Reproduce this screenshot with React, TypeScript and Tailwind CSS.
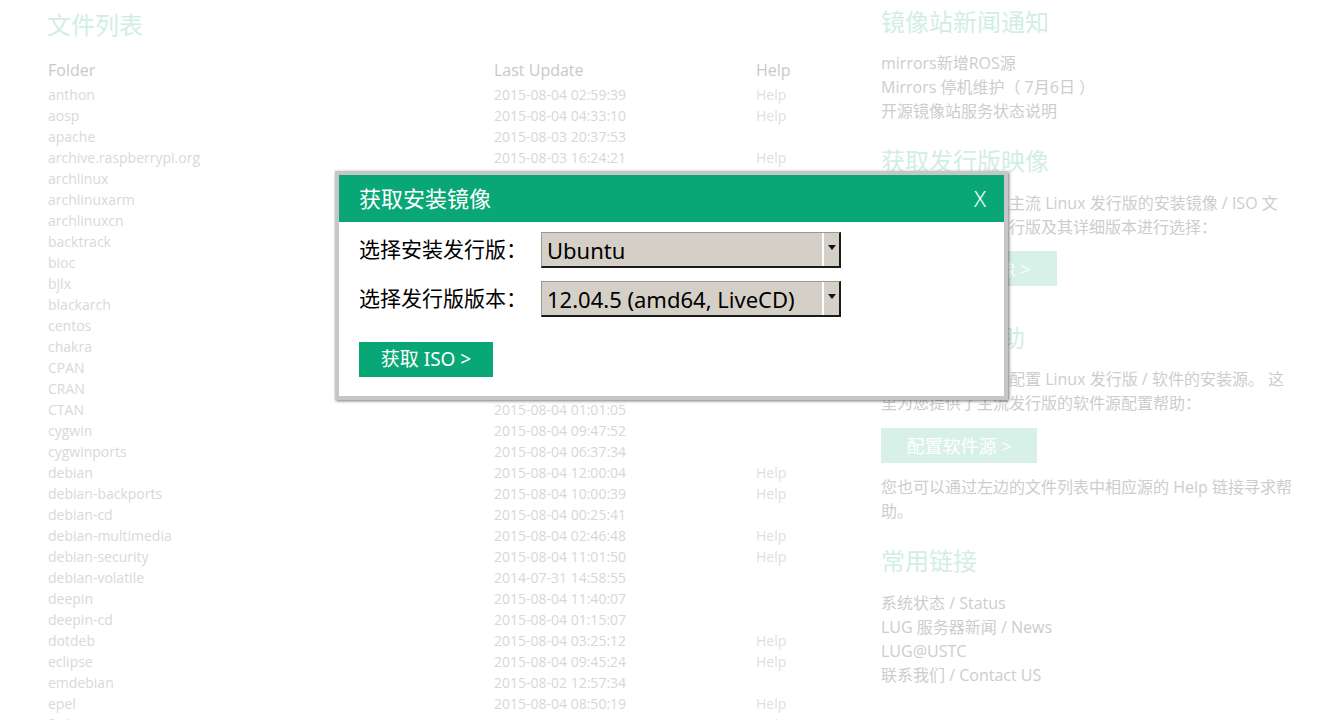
import React from "react"

type Row = { name: string; date: string; help?: boolean }

const rows: Row[] = [
	{ name: "anthon", date: "2015-08-04 02:59:39", help: true },
	{ name: "aosp", date: "2015-08-04 04:33:10", help: true },
	{ name: "apache", date: "2015-08-03 20:37:53" },
	{ name: "archive.raspberrypi.org", date: "2015-08-03 16:24:21", help: true },
	{ name: "archlinux", date: "2015-08-04 09:12:40", help: true },
	{ name: "archlinuxarm", date: "2015-08-04 08:01:22" },
	{ name: "archlinuxcn", date: "2015-08-04 10:45:03", help: true },
	{ name: "backtrack", date: "2015-08-03 22:11:18" },
	{ name: "bioc", date: "2015-08-04 03:30:51" },
	{ name: "bjlx", date: "2015-08-04 05:20:09" },
	{ name: "blackarch", date: "2015-08-04 07:44:36" },
	{ name: "centos", date: "2015-08-04 06:02:15", help: true },
	{ name: "chakra", date: "2015-08-04 04:18:27" },
	{ name: "CPAN", date: "2015-08-04 11:26:44", help: true },
	{ name: "CRAN", date: "2015-08-04 02:05:33", help: true },
	{ name: "CTAN", date: "2015-08-04 01:01:05" },
	{ name: "cygwin", date: "2015-08-04 09:47:52" },
	{ name: "cygwinports", date: "2015-08-04 06:37:34" },
	{ name: "debian", date: "2015-08-04 12:00:04", help: true },
	{ name: "debian-backports", date: "2015-08-04 10:00:39", help: true },
	{ name: "debian-cd", date: "2015-08-04 00:25:41" },
	{ name: "debian-multimedia", date: "2015-08-04 02:46:48", help: true },
	{ name: "debian-security", date: "2015-08-04 11:01:50", help: true },
	{ name: "debian-volatile", date: "2014-07-31 14:58:55" },
	{ name: "deepin", date: "2015-08-04 11:40:07" },
	{ name: "deepin-cd", date: "2015-08-04 01:15:07" },
	{ name: "dotdeb", date: "2015-08-04 03:25:12", help: true },
	{ name: "eclipse", date: "2015-08-04 09:45:24", help: true },
	{ name: "emdebian", date: "2015-08-02 12:57:34" },
	{ name: "epel", date: "2015-08-04 08:50:19", help: true },
	{ name: "fedora", date: "2015-08-04 07:33:02", help: true },
]

function FakeSelect({ value }: { value: string }) {
	return (
		<div className="flex h-[36px] w-[300px] bg-[#d4d0c8] border-t border-l border-[#9a9890] border-b-2 border-r-2 border-b-[#1a1a1a] border-r-[#1a1a1a]">
			<div className="flex-1 pl-[5px] text-[22px] leading-[34px] text-black">{value}</div>
			<div className="flex w-[17px] items-start justify-center border-l-2 border-white pt-[12px]">
				<div className="h-0 w-0 border-x-[4px] border-t-[5px] border-x-transparent border-t-[#111]" />
			</div>
		</div>
	)
}

export default function App() {
	return (
		<div className="relative h-[720px] w-[1324px] overflow-hidden bg-white font-['Open_Sans','Noto_Sans_CJK_SC',sans-serif]">
			{/* Background page (faded behind modal) */}
			<div className="flex">
				{/* File list */}
				<div className="w-[881px] shrink-0 pl-[47px] pt-[8px]">
					<h1 className="h-[34px] text-[24px] leading-[34px] text-[#d2eee4]">文件列表</h1>
					<div className="mt-[16px] grid grid-cols-[446px_262px_1fr] pl-px">
						<div className="h-[26px] text-[16px] leading-[24px] text-[#c9c9c9]">Folder</div>
						<div className="h-[26px] text-[16px] leading-[24px] text-[#c9c9c9]">Last Update</div>
						<div className="h-[26px] text-[16px] leading-[24px] text-[#c9c9c9]">Help</div>
						{rows.map((r) => (
							<React.Fragment key={r.name}>
								<div className="h-[21px] text-[14px] leading-[21px] text-[#d7d9da]">{r.name}</div>
								<div className="h-[21px] text-[14px] leading-[21px] text-[#d7d7d7]">{r.date}</div>
								<div className="h-[21px] text-[14px] leading-[21px] text-[#dedfe0]">{r.help ? "Help" : ""}</div>
							</React.Fragment>
						))}
					</div>
				</div>

				{/* Side column */}
				<div className="w-[416px] pt-[5px] text-[16px] leading-[24px] text-[#cdcdcd]">
					<h2 className="h-[34px] text-[24px] leading-[34px] text-[#d2eee4]">镜像站新闻通知</h2>
					<div className="mt-[12px]">
						<div>mirrors新增ROS源</div>
						<div>Mirrors 停机维护（ 7月6日 ）</div>
						<div>开源镜像站服务状态说明</div>
					</div>

					<h2 className="mt-[21px] h-[34px] text-[24px] leading-[34px] text-[#d2eee4]">获取发行版映像</h2>
					<p className="mt-[13px]">
						您可以在这里获取主流 Linux 发行版的安装镜像 / ISO 文件，请在下方对发行版及其详细版本进行选择：
					</p>
					<div className="mt-[12px] flex h-[35px] w-[176px] items-center justify-center bg-[#d7f1e9] text-[18px] text-white">
						获取安装镜像 &gt;
					</div>

					<h2 className="mt-[35px] h-[34px] text-[24px] leading-[34px] text-[#d2eee4]">获取配置帮助</h2>
					<p className="mt-[12px]">
						使用前需要先正确配置 Linux 发行版 / 软件的安装源。 这里为您提供了主流发行版的软件源配置帮助：
					</p>
					<div className="mt-[13px] flex h-[35px] w-[156px] items-center justify-center bg-[#d7f1e9] text-[18px] text-white">
						配置软件源 &gt;
					</div>
					<p className="mt-[12px]">您也可以通过左边的文件列表中相应源的 Help 链接寻求帮助。</p>

					<h2 className="mt-[21px] h-[34px] text-[24px] leading-[34px] text-[#d2eee4]">常用链接</h2>
					<div className="mt-[13px]">
						<div>系统状态 / Status</div>
						<div>LUG 服务器新闻 / News</div>
						<div>LUG@USTC</div>
						<div>联系我们 / Contact US</div>
					</div>
				</div>
			</div>

			{/* Modal */}
			<div className="absolute left-[335px] top-[171px] w-[673px] border-4 border-[#c6c6c6] bg-white font-['Noto_Sans','Noto_Sans_CJK_SC',sans-serif] shadow-[1px_1px_3px_rgba(0,0,0,0.55)]">
				<div className="flex h-[47px] items-center justify-between bg-[#0aa776] pl-[20px] pr-[18px] text-white">
					<span className="text-[22px]">获取安装镜像</span>
					<span className="text-[22px] font-light">X</span>
				</div>
				<div className="px-[20px] pb-[19px] pt-[10px]">
					<div className="flex items-center">
						<span className="w-[182px] text-[21px] text-black">选择安装发行版：</span>
						<FakeSelect value="Ubuntu" />
					</div>
					<div className="mt-[13px] flex items-center">
						<span className="w-[182px] text-[21px] text-black">选择发行版版本：</span>
						<FakeSelect value="12.04.5 (amd64, LiveCD)" />
					</div>
					<div className="mt-[25px] flex h-[35px] w-[134px] items-center justify-center bg-[#0aa776] text-[19px] text-white">
						获取 ISO &gt;
					</div>
				</div>
			</div>
		</div>
	)
}
